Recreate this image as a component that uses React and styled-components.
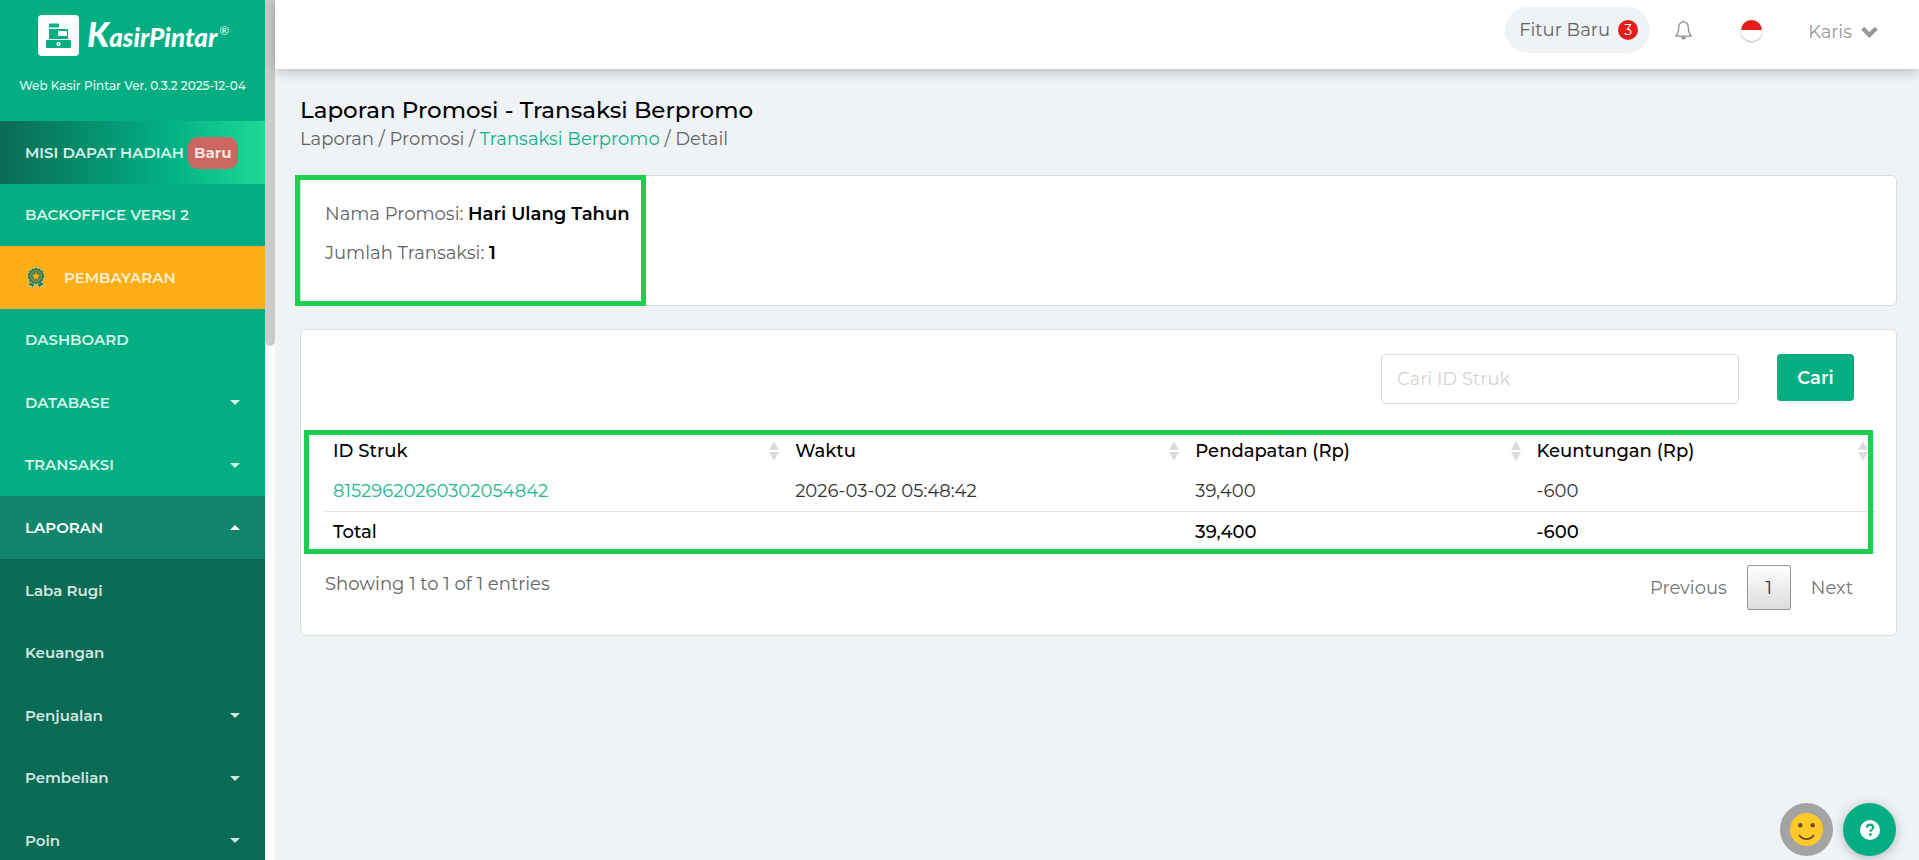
import React from 'react';
import styled, { createGlobalStyle, css } from 'styled-components';

const GlobalStyle = createGlobalStyle`
  * {
    box-sizing: border-box;
  }
  body {
    margin: 0;
    background: #eff3f6;
    color: #636363;
    font-family: Montserrat, Inter, "Liberation Sans", sans-serif;
    font-size: 18px;
    line-height: 24px;
  }
  button, input {
    font-family: inherit;
    font-size: inherit;
  }
  a {
    text-decoration: none;
  }
`;

const Layout = styled.div`
  display: flex;
  height: 100vh;
  overflow: hidden;
`;

const Sidebar = styled.aside`
  flex: 0 0 265px;
  background: #02ae82;
  overflow: hidden;
`;

const ScrollTrack = styled.div`
  flex: 0 0 10px;
  background: #fff;
`;

const ScrollThumb = styled.div`
  height: 346px;
  background: #cbcbcb;
  border-radius: 0 0 5px 5px;
`;

const Brand = styled.div`
  height: 121px;
  padding-top: 15px;
`;

const BrandLink = styled.a`
  display: flex;
  gap: 8px;
  padding-left: 38px;
  color: #fff;
`;

const BrandName = styled.span`
  display: flex;
  align-items: baseline;
  font-family: Lato, sans-serif;
  font-size: 26px;
  font-weight: 900;
  font-style: italic;
  line-height: 38px;
`;

const BrandInitial = styled.span`
  font-size: 34px;
`;

const Registered = styled.sup`
  align-self: flex-start;
  margin-left: 2px;
  font-size: 12px;
  font-weight: 400;
  font-style: normal;
  line-height: 32px;
`;

const Version = styled.p`
  margin: 20px 0 0;
  color: #e6f7f2;
  font-size: 12px;
  font-weight: 500;
  line-height: 20px;
  text-align: center;
`;

const Menu = styled.ul`
  margin: 0;
  padding: 0;
  list-style: none;
`;

const variants = {
  mission: css`
    background: linear-gradient(to right, #0b6b54, #02a67d 55%, #02b284 65%, #1fd996);
  `,
  payment: css`
    background: #fdae17;
    color: #fdf0d6;
  `,
  active: css`
    background: #11866d;
    color: #fff;
  `,
  sub: css`
    background: #0a6b54;
    color: #d3e6e1;
  `,
};

const MenuLink = styled.a`
  display: flex;
  align-items: center;
  height: 62px;
  padding: 0 25px;
  color: #d6f2ea;
  font-size: 15px;
  font-weight: 600;
  ${props => variants[props.$variant]}

  li:nth-child(odd) > & {
    height: 63px;
  }
`;

const NewBadge = styled.span`
  margin-left: 4px;
  padding: 4px 6px;
  border-radius: 10px;
  background: #cb6660;
  color: #f2e1dd;
  font-weight: 700;
`;

const Caret = styled.span`
  margin-left: auto;
  border: 5px solid transparent;
  border-bottom-width: 0;
  border-top-color: currentColor;
  ${props => props.$up && css`
    border-bottom: 5px solid currentColor;
    border-top-width: 0;
  `}
`;

const MedalIcon = styled.svg`
  width: 20px;
  height: 22px;
  margin: 0 18px 0 1px;
`;

const Page = styled.div`
  flex: 1;
  min-width: 0;
  display: flex;
  flex-direction: column;
`;

const TopBar = styled.header`
  display: flex;
  justify-content: flex-end;
  align-items: flex-start;
  height: 69px;
  padding: 7px 41px 0 0;
  background: #fff;
  box-shadow: 0 2px 12px rgba(0, 0, 0, 0.25);
`;

const FeatureButton = styled.button`
  display: flex;
  align-items: center;
  gap: 8px;
  height: 46px;
  padding: 0 12px 0 14px;
  border: none;
  border-radius: 23px;
  background: #eff3f6;
  color: #636363;
`;

const Count = styled.span`
  width: 20px;
  height: 20px;
  border-radius: 50%;
  background: #e51c1c;
  color: #fff;
  font-size: 14px;
  line-height: 20px;
`;

const IconButton = styled.button`
  display: flex;
  align-items: center;
  height: 46px;
  margin-left: ${props => props.$gap};
  padding: 0;
  border: none;
  background: none;
`;

const Flag = styled.span`
  width: 21px;
  height: 21px;
  border-radius: 50%;
  background: linear-gradient(#e51c1c 50%, #fff 50%);
  box-shadow: 0 1px 2px rgba(0, 0, 0, 0.35);
`;

const UserButton = styled.button`
  display: flex;
  align-items: center;
  gap: 9px;
  height: 50px;
  margin-left: 46px;
  padding: 0;
  border: none;
  background: none;
  color: #999;
`;

const Main = styled.main`
  flex: 1;
  padding: 26px 22px 24px 25px;
`;

const Title = styled.h1`
  margin: 0;
  color: #000;
  font-size: 23px;
  font-weight: 500;
  line-height: 30px;
`;

const Breadcrumb = styled.nav`
  line-height: 28px;

  a {
    color: inherit;
  }
`;

const CrumbActive = styled.span`
  color: #10b188;
`;

const Card = styled.section`
  position: relative;
  padding: 24px;
  border: 1px solid #d9dee1;
  border-radius: 6px;
  background: #fff;
`;

const SummaryCard = styled(Card)`
  margin-top: 22px;
  min-height: 131px;
  padding-top: 26px;
`;

const SummaryLine = styled.p`
  margin: 0 0 15px;

  &:nth-child(2) {
    margin-bottom: 0;
  }

  strong {
    color: #000;
    font-weight: 600;
  }
`;

const ReportCard = styled(Card)`
  margin-top: 23px;
  padding-right: 20px;
`;

// green frames lying over the parts that are pointed out
const Highlight = styled.div`
  position: absolute;
  border: 5px solid #1fcf4f;
  pointer-events: none;
`;

const SummaryHighlight = styled(Highlight)`
  top: -1px;
  bottom: -1px;
  left: -6px;
  width: 351px;
`;

const TableHighlight = styled(Highlight)`
  top: -1px;
  bottom: -1px;
  left: -21px;
  right: 3px;
`;

const SearchForm = styled.form`
  display: flex;
  justify-content: flex-end;
  align-items: flex-start;
  gap: 38px;
  padding-right: 22px;
`;

const SearchInput = styled.input`
  width: 358px;
  height: 50px;
  padding: 0 15px;
  border: 1px solid #dcdcdc;
  border-radius: 4px;
  color: #636363;
  outline: none;

  &::placeholder {
    color: #d3d3d3;
    opacity: 1;
  }
`;

const SearchButton = styled.button`
  width: 77px;
  height: 47px;
  border: none;
  border-radius: 4px;
  background: #02ae82;
  color: #fff;
  font-weight: 600;
`;

const TableWrapper = styled.div`
  position: relative;
  margin-top: 27px;
`;

const Table = styled.table`
  width: 100%;
  border-collapse: separate;
  border-spacing: 0;
  table-layout: fixed;
  text-align: left;

  td, th {
    height: 41px;
    padding: 0 8px;
    border-bottom: 1px solid #dfdfdf;
    color: #333;
    font-weight: 400;
  }
  thead th {
    height: 40px;
    border-bottom: none;
  }
  thead th, tfoot td, tfoot th {
    color: #000;
    font-weight: 500;
  }
  a {
    color: #1fb58e;
  }
`;

const HeadCell = styled.th`
  width: ${props => props.$width};
`;

const HeadInner = styled.div`
  display: flex;
  justify-content: space-between;
  align-items: center;
`;

const TableFooter = styled.div`
  display: flex;
  justify-content: space-between;
  align-items: flex-start;
  margin-top: 12px;
  padding-right: 23px;
`;

const TableInfo = styled.div`
  padding-top: 7px;
`;

const Pagination = styled.nav`
  display: flex;
  align-items: center;
  gap: 20px;
  padding-bottom: 1px;
`;

const PageLink = styled.button`
  padding: 0;
  border: none;
  background: none;
  color: #757575;
`;

const CurrentPage = styled.button`
  width: 44px;
  height: 45px;
  padding: 0;
  border: 1px solid #979797;
  border-radius: 2px;
  background: linear-gradient(#fff, #dcdcdc);
  color: #333;
`;

const Floating = styled.div`
  position: fixed;
  right: 23px;
  bottom: 4px;
  display: flex;
  gap: 10px;
`;

const RoundButton = styled.button`
  display: flex;
  justify-content: center;
  align-items: center;
  width: 53px;
  height: 53px;
  padding: 0;
  border: none;
  border-radius: 50%;
  background: ${props => (props.$primary ? '#02ae82' : '#a3a3a3')};
  box-shadow: ${props => (props.$primary ? '0 2px 12px rgba(0, 0, 0, 0.25)' : 'none')};
`;

const menu = [
  { label: 'MISI DAPAT HADIAH', variant: 'mission', badge: 'Baru' },
  { label: 'BACKOFFICE VERSI 2' },
  { label: 'PEMBAYARAN', variant: 'payment', medal: true },
  { label: 'DASHBOARD' },
  { label: 'DATABASE', caret: true },
  { label: 'TRANSAKSI', caret: true },
  {
    label: 'LAPORAN',
    variant: 'active',
    caret: true,
    children: [
      { label: 'Laba Rugi', variant: 'sub' },
      { label: 'Keuangan', variant: 'sub' },
      { label: 'Penjualan', variant: 'sub', caret: true },
      { label: 'Pembelian', variant: 'sub', caret: true },
      { label: 'Poin', variant: 'sub', caret: true },
    ],
  },
];

const columns = [
  { label: 'ID Struk', width: '29.8%' },
  { label: 'Waktu', width: '25.8%' },
  { label: 'Pendapatan (Rp)', width: '22%' },
  { label: 'Keuntungan (Rp)', width: 'auto' },
];

const rows = [
  { id: '81529620260302054842', time: '2026-03-02 05:48:42', income: '39,400', profit: '-600' },
];

const Medal = () => (
  <MedalIcon viewBox="0 0 20 22" aria-hidden="true">
    <path d="M5 12 1.500 19l3.300-.3L6.500 21.500 10 15l3.500 6.500 1.700-2.800 3.300.3L15 12z" fill="#1f7d62" stroke="#f6d48f" strokeWidth=".8" />
    <circle cx="10" cy="9" r="8.500" fill="#f6d48f" />
    <circle cx="10" cy="9" r="7.500" fill="#1f7d62" stroke="#1f7d62" strokeWidth="1.500" strokeDasharray="2.200 1.200" />
    <circle cx="10" cy="9" r="5.500" fill="#4d8450" stroke="#b98d2c" strokeWidth="1" />
    <path d="m10 5.200 1.200 2.500 2.700.3-2 1.900.5 2.700L10 11.300l-2.400 1.300.5-2.700-2-1.900 2.700-.3z" fill="#fdae17" />
  </MedalIcon>
);

const LogoIcon = () => (
  <svg width="41" height="41" viewBox="0 0 41 41" aria-hidden="true">
    <rect width="41" height="41" rx="4" fill="#fff" />
    <rect x="11" y="8.500" width="10" height="4" rx="1" fill="#02ae82" />
    <path d="M11 14h19v10H11z" fill="#02ae82" />
    <rect x="20" y="16" width="9" height="5" rx="1" fill="#fff" />
    <rect x="8" y="25" width="25" height="8" rx="1" fill="#02ae82" />
    <circle cx="20.500" cy="29" r="1.500" fill="none" stroke="#fff" strokeWidth="1.300" />
  </svg>
);

const SortIcon = () => (
  <svg width="10" height="20" viewBox="0 0 10 20" aria-hidden="true">
    <path d="M5 0l5 9H0zM5 20l5-9H0z" fill="#dcdcdc" />
  </svg>
);

const BellIcon = () => (
  <svg width="17" height="20" viewBox="0 0 16 19" fill="none" stroke="#8c8c8c" aria-hidden="true">
    <path d="M8 .5v1.200M8 1.700c-3 0-4.500 2.200-4.500 5 0 4.600-1 6.500-2.800 8.600h14.600c-1.800-2.100-2.800-4-2.800-8.600 0-2.800-1.500-5-4.500-5z" strokeWidth="1.200" strokeLinejoin="round" />
    <path d="M6 16.300a2 2 0 0 0 4 0z" fill="#8c8c8c" strokeWidth=".6" />
  </svg>
);

const ChevronIcon = () => (
  <svg width="17" height="12" viewBox="0 0 17 12" aria-hidden="true">
    <path d="M1.700 2.200l6.800 6.800 6.800-6.800" fill="none" stroke="#999" strokeWidth="4.200" />
  </svg>
);

const SmileIcon = () => (
  <svg width="33" height="33" viewBox="0 0 33 33" aria-hidden="true">
    <circle cx="16.500" cy="16.500" r="16.500" fill="#ffca28" />
    <circle cx="10.300" cy="12.300" r="2.200" fill="#6d4c33" />
    <circle cx="22.700" cy="12.300" r="2.200" fill="#6d4c33" />
    <path d="M9.500 22.500c3.500 4.700 10.500 4.700 14 0" fill="none" stroke="#6d4c33" strokeWidth="2" strokeLinecap="round" />
  </svg>
);

const HelpIcon = () => (
  <svg width="20" height="20" viewBox="0 0 20 20" aria-hidden="true">
    <circle cx="10" cy="10" r="10" fill="#fff" />
    <path d="M6.800 7.600C7 5.700 8.300 4.700 10.100 4.700c1.900 0 3.200 1 3.200 2.600 0 2.200-2.900 2.300-2.900 4.500" fill="none" stroke="#02ae82" strokeWidth="2.200" />
    <rect x="9" y="13.300" width="2.600" height="2.500" rx=".5" fill="#02ae82" />
  </svg>
);

const MenuItem = ({ item }) => (
  <li>
    <MenuLink href="#" $variant={item.variant}>
      {item.medal && <Medal />}
      {item.label}
      {item.badge && <NewBadge>{item.badge}</NewBadge>}
      {item.caret && <Caret $up={!!item.children} />}
    </MenuLink>
    {item.children && (
      <Menu>
        {item.children.map(child => <MenuItem key={child.label} item={child} />)}
      </Menu>
    )}
  </li>
);

const App = () => (
  <>
    <GlobalStyle />
    <Layout>
      <Sidebar>
        <Brand>
          <BrandLink href="#">
            <LogoIcon />
            <BrandName>
              <BrandInitial>K</BrandInitial>
              asirPintar
              <Registered>®</Registered>
            </BrandName>
          </BrandLink>
          <Version>Web Kasir Pintar Ver. 0.3.2 2025-12-04</Version>
        </Brand>
        <Menu>
          {menu.map(item => <MenuItem key={item.label} item={item} />)}
        </Menu>
      </Sidebar>
      <ScrollTrack>
        <ScrollThumb />
      </ScrollTrack>
      <Page>
        <TopBar>
          <FeatureButton type="button">
            Fitur Baru
            <Count>3</Count>
          </FeatureButton>
          <IconButton type="button" $gap="25px" aria-label="Notifikasi">
            <BellIcon />
          </IconButton>
          <IconButton type="button" $gap="49px" aria-label="Bahasa Indonesia">
            <Flag />
          </IconButton>
          <UserButton type="button">
            Karis
            <ChevronIcon />
          </UserButton>
        </TopBar>
        <Main>
          <Title>Laporan Promosi - Transaksi Berpromo</Title>
          <Breadcrumb>
            <a href="#">Laporan</a>
            {' / '}
            <a href="#">Promosi</a>
            {' / '}
            <a href="#"><CrumbActive>Transaksi Berpromo</CrumbActive></a>
            {' / Detail'}
          </Breadcrumb>
          <SummaryCard>
            <SummaryLine>Nama Promosi: <strong>Hari Ulang Tahun</strong></SummaryLine>
            <SummaryLine>Jumlah Transaksi: <strong>1</strong></SummaryLine>
            <SummaryHighlight />
          </SummaryCard>
          <ReportCard>
            <SearchForm onSubmit={e => e.preventDefault()}>
              <SearchInput type="text" placeholder="Cari ID Struk" aria-label="Cari ID Struk" />
              <SearchButton type="submit">Cari</SearchButton>
            </SearchForm>
            <TableWrapper>
              <Table>
                <thead>
                  <tr>
                    {columns.map(column => (
                      <HeadCell key={column.label} $width={column.width} scope="col">
                        <HeadInner>
                          {column.label}
                          <SortIcon />
                        </HeadInner>
                      </HeadCell>
                    ))}
                  </tr>
                </thead>
                <tbody>
                  {rows.map(row => (
                    <tr key={row.id}>
                      <td><a href="#">{row.id}</a></td>
                      <td>{row.time}</td>
                      <td>{row.income}</td>
                      <td>{row.profit}</td>
                    </tr>
                  ))}
                </tbody>
                <tfoot>
                  <tr>
                    <th scope="row">Total</th>
                    <td />
                    <td>39,400</td>
                    <td>-600</td>
                  </tr>
                </tfoot>
              </Table>
              <TableHighlight />
            </TableWrapper>
            <TableFooter>
              <TableInfo>Showing 1 to 1 of 1 entries</TableInfo>
              <Pagination aria-label="Halaman">
                <PageLink type="button">Previous</PageLink>
                <CurrentPage type="button" aria-current="page">1</CurrentPage>
                <PageLink type="button">Next</PageLink>
              </Pagination>
            </TableFooter>
          </ReportCard>
        </Main>
      </Page>
    </Layout>
    <Floating>
      <RoundButton type="button" aria-label="Beri penilaian">
        <SmileIcon />
      </RoundButton>
      <RoundButton type="button" aria-label="Bantuan" $primary>
        <HelpIcon />
      </RoundButton>
    </Floating>
  </>
);

export default App;
